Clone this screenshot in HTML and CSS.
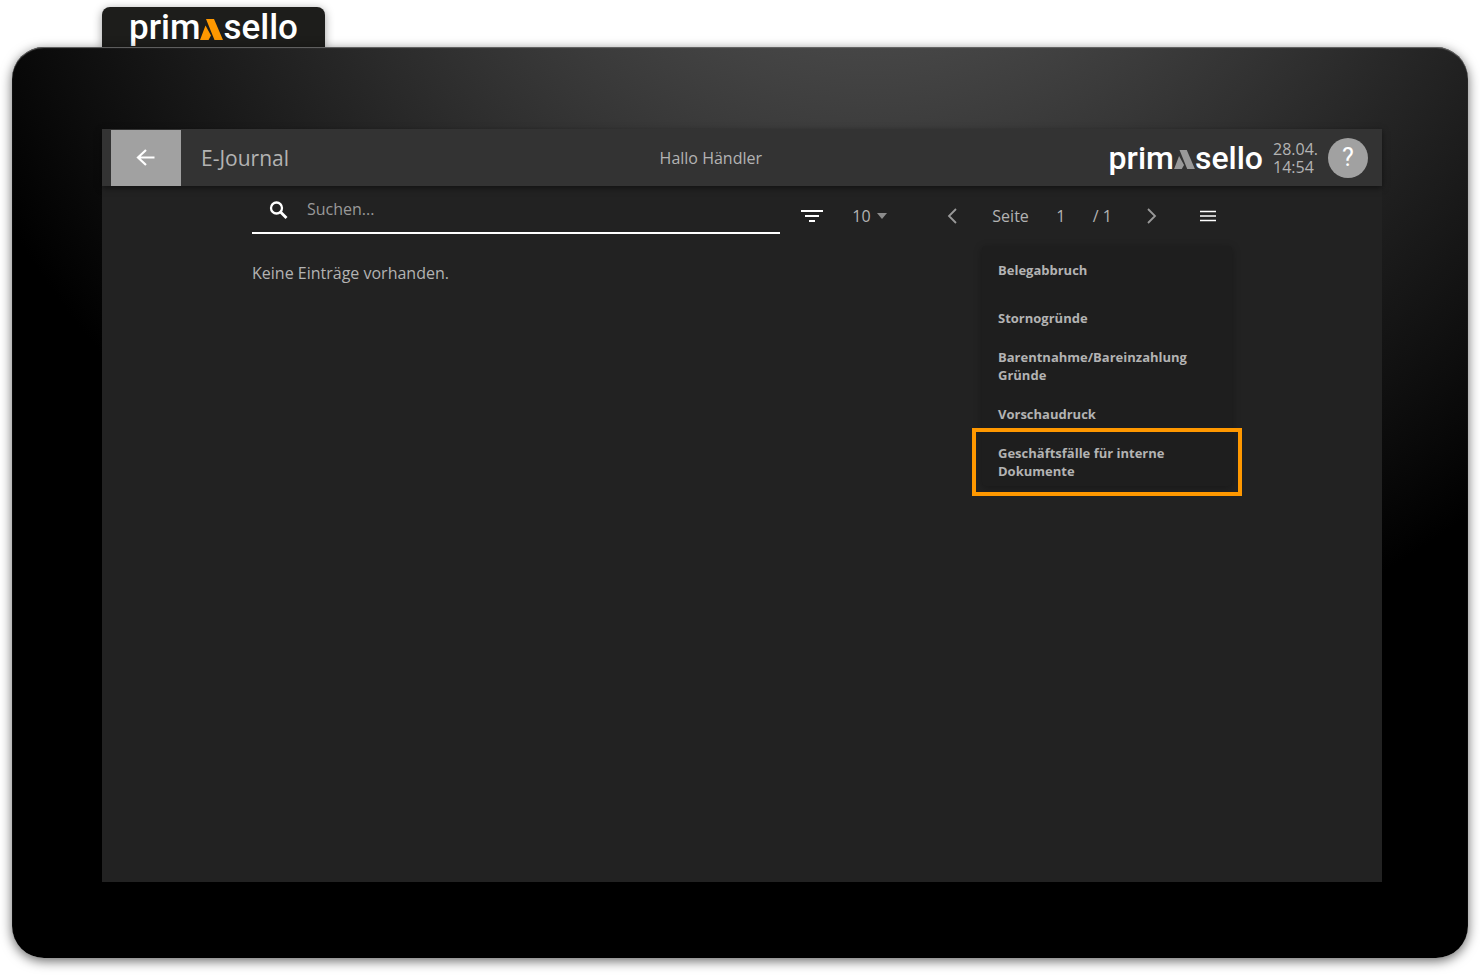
FILE: index.html
```
<!DOCTYPE html>
<html lang="de">
<head>
    <meta charset="UTF-8">
    <meta name="viewport" content="width=device-width, initial-scale=1.0">
    <title>primasello - E-Journal</title>
    <link rel="stylesheet" href="styles.css">
</head>
<body>
    <div class="tab">
        <div class="logo">
            <span>prim</span>
            <svg class="mark" viewBox="0 0 23 21"><path d="M5.500 6.500L0 21H8.500L11 16.500ZM6 0H14L23 21H14.500Z"/></svg>
            <span>sello</span>
        </div>
    </div>
    <div class="frame">
        <div class="screen">
            <header class="header">
                <button class="back" aria-label="Zurück">
                    <svg width="24" height="24" viewBox="0 0 24 24"><path d="M20.500 11.500H4.500M12 4L4 11.500L12 19" fill="none" stroke="currentColor" stroke-width="2.200"/></svg>
                </button>
                <h1 class="title">E-Journal</h1>
                <span class="greeting">Hallo Händler</span>
                <div class="status">
                    <div class="logo logo-small">
                        <span>prim</span>
                        <svg class="mark" viewBox="0 0 23 21"><path d="M5.500 6.500L0 21H8.500L11 16.500ZM6 0H14L23 21H14.500Z"/></svg>
                        <span>sello</span>
                    </div>
                    <div class="clock">28.04.<br>14:54</div>
                    <button class="help" aria-label="Hilfe">?</button>
                </div>
            </header>

            <main class="content">
                <div class="toolbar">
                    <label class="search">
                        <svg width="24" height="24" viewBox="0 0 24 24"><path d="M13.500 15L19.500 21" stroke="#fff" stroke-width="2.800"/><circle cx="9.500" cy="11" r="5.500" fill="none" stroke="#fff" stroke-width="2.300"/></svg>
                        <input type="text" placeholder="Suchen..." aria-label="Suchen">
                    </label>
                    <div class="tools">
                        <button class="icon" aria-label="Filter">
                            <svg width="22" height="14" viewBox="0 0 22 14" fill="#fff"><path d="M0 1H22V3H0ZM4 6H18V8H4ZM8 11H14V13H8Z"/></svg>
                        </button>
                        <div class="per-page">
                            <select aria-label="Einträge pro Seite">
                                <option>10</option>
                                <option>20</option>
                            </select>
                            <svg width="10" height="6" viewBox="0 0 10 6" fill="#8c8c8c"><path d="M0 0H10L5 6Z"/></svg>
                        </div>
                        <button class="icon" aria-label="Vorherige Seite">
                            <svg width="10" height="16" viewBox="0 0 10 16"><path d="M9 1L2 8L9 15" fill="none" stroke="#999" stroke-width="1.800"/></svg>
                        </button>
                        <label class="page" for="page">Seite</label>
                        <input class="page-number" id="page" type="text" value="1">
                        <span class="page-count">/ 1</span>
                        <button class="icon" aria-label="Nächste Seite">
                            <svg width="10" height="16" viewBox="0 0 10 16"><path d="M1 1L8 8L1 15" fill="none" stroke="#999" stroke-width="1.800"/></svg>
                        </button>
                        <div class="menu-box">
                            <button class="icon" aria-label="Menü">
                                <svg width="18" height="12" viewBox="0 0 18 12"><path d="M1 1.500H17M1 6H17M1 10.500H17" fill="none" stroke="#fff" stroke-width="1.500"/></svg>
                            </button>
                            <div class="menu">
                                <button class="item">Belegabbruch</button>
                                <button class="item">Stornogründe</button>
                                <button class="item">Barentnahme/Bareinzahlung Gründe</button>
                                <button class="item">Vorschaudruck</button>
                                <button class="item marked">Geschäftsfälle für interne Dokumente</button>
                            </div>
                        </div>
                    </div>
                </div>
                <p class="empty">Keine Einträge vorhanden.</p>
            </main>
        </div>
    </div>
</body>
</html>
```

FILE: styles.css
```
* {
    box-sizing: border-box;
}

body {
    display: flex;
    flex-direction: column;
    min-height: 100vh;
    margin: 0;
    padding: 7px 12px 17px;
    background: #fff;
    color: #b3b3b3;
    font-family: "Open Sans", sans-serif;
    font-size: 16px;
}

button, input, select {
    margin: 0;
    padding: 0;
    border: 0;
    background: none;
    color: inherit;
    font: inherit;
}

button {
    cursor: pointer;
}

.tab {
    align-self: flex-start;
    height: 40px;
    margin-left: 90px;
    padding: 0 27px;
    border-radius: 8px 8px 0 0;
    background: #1d1d1b;
    box-shadow: 0 2px 10px rgba(0, 0, 0, 0.4);
}

.logo {
    display: flex;
    align-items: flex-start;
    color: #fff;
    font-family: Roboto, sans-serif;
    font-size: 35px;
    font-weight: 500;
    line-height: 41px;
}

.mark {
    width: 23px;
    height: 21px;
    margin-top: 12px;
    fill: #ff9800;
}

.logo-small {
    font-size: 32px;
    line-height: 36px;
}

.logo-small .mark {
    width: 21px;
    height: 19px;
    margin-top: 10px;
    fill: #999;
}

.frame {
    position: relative;
    display: flex;
    flex: 1;
    padding: 82px 86px 76px 90px;
    border-radius: 32px;
    background: radial-gradient(ellipse 69% 110% at 59% -37%, #696969, #000);
    box-shadow: 0 3px 12px rgba(0, 0, 0, 0.6), inset 0 1px 1px #666;
}

.screen {
    flex: 1;
    min-width: 0;
    background: #222;
}

.header {
    display: flex;
    align-items: center;
    justify-content: space-between;
    padding: 1px 14px 0 9px;
    background: #333;
    box-shadow: 0 2px 6px rgba(0, 0, 0, 0.5);
}

.back {
    display: flex;
    align-items: center;
    justify-content: center;
    width: 70px;
    height: 56px;
    background: #a1a1a1;
    color: #fff;
}

.title {
    margin: 0 24px 0 20px;
    font-size: 21px;
    font-weight: 400;
}

.greeting {
    margin: 0 auto;
}

.status {
    display: flex;
    align-items: center;
    gap: 10px;
}

.clock {
    line-height: 18px;
}

.help {
    width: 40px;
    height: 40px;
    border-radius: 50%;
    background: #a1a1a1;
    color: #fff;
    font-family: Roboto, sans-serif;
    font-size: 25px;
    line-height: 40px;
}

.content {
    padding: 0 150px;
}

.toolbar {
    display: flex;
    gap: 8px;
}

.search {
    display: flex;
    flex: 1;
    align-items: center;
    gap: 16px;
    height: 48px;
    padding-left: 15px;
    border-bottom: 2px solid #fff;
}

.search input {
    flex: 1;
    min-width: 0;
    outline: none;
}

.search input::placeholder {
    color: #999;
}

.tools {
    display: flex;
    align-items: center;
    height: 60px;
}

.icon {
    display: flex;
    align-items: center;
    justify-content: center;
    width: 48px;
    height: 48px;
}

.per-page {
    display: flex;
    align-items: center;
    gap: 6px;
    margin: 0 41px 0 16px;
}

.per-page select {
    appearance: none;
    width: 19px;
}

.page {
    margin: 0 16px;
}

.page-number {
    width: 32px;
    text-align: center;
}

.page-count {
    margin: 0 16px;
}

.menu-box {
    position: relative;
    margin-left: 8px;
}

.menu {
    position: absolute;
    top: 54px;
    right: 0;
    width: 250px;
    border-radius: 4px;
    background: #1e1e1e;
    box-shadow: 0 2px 8px rgba(0, 0, 0, 0.3);
}

.item {
    display: block;
    position: relative;
    width: 100%;
    height: 48px;
    padding: 0 16px;
    font-size: 13px;
    font-weight: 700;
    line-height: 18px;
    text-align: left;
}

.marked::after {
    content: "";
    position: absolute;
    inset: -10px;
    border: 4px solid #ff9800;
}

.empty {
    margin: 16px 0;
    line-height: 22px;
}
```
